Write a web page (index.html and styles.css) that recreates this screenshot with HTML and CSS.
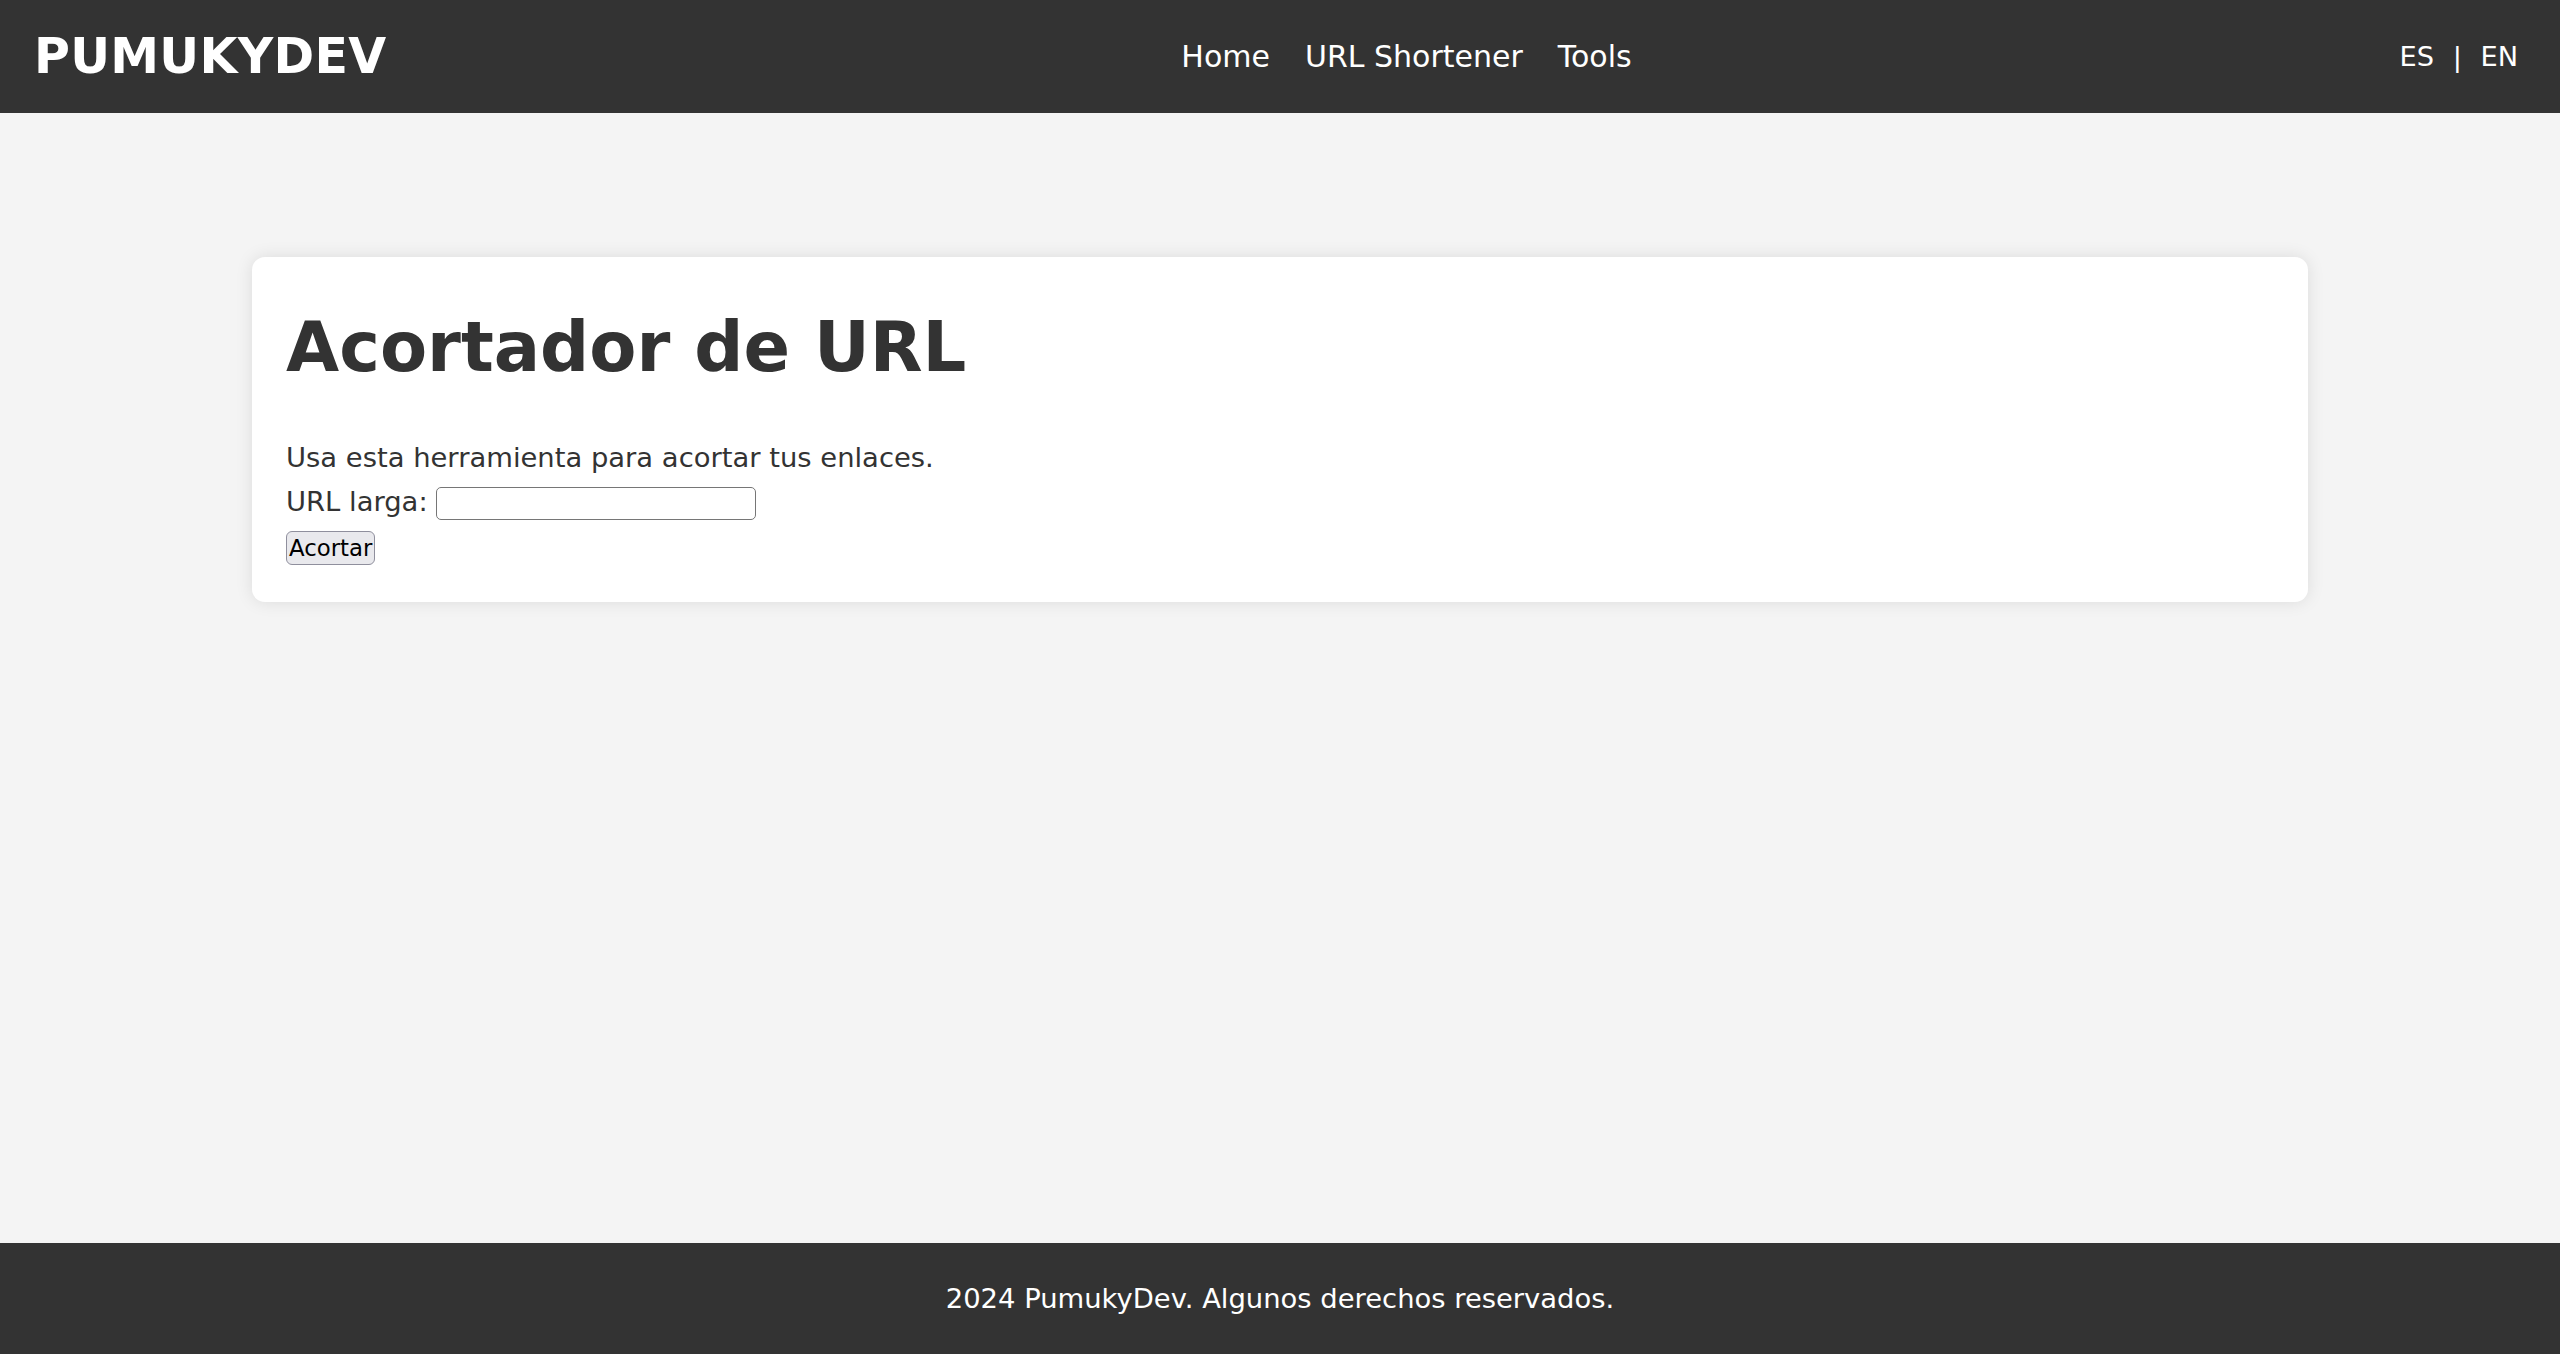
FILE: index.html
```html
<!DOCTYPE html>
<html lang="es">
<head>
<meta charset="utf-8">
<title>Acortador de URL - PumukyDev</title>
<link rel="stylesheet" href="styles.css">
</head>
<body>
<header class="site-header">
  <div class="logo">PUMUKYDEV</div>
  <nav class="nav">
    <a href="#">Home</a>
    <a href="#">URL Shortener</a>
    <a href="#">Tools</a>
  </nav>
  <div class="lang">
    <a href="#">ES</a>
    <span class="sep">|</span>
    <a href="#">EN</a>
  </div>
</header>
<main class="main">
  <section class="card">
    <h1 class="title">Acortador de URL</h1>
    <p class="intro">Usa esta herramienta para acortar tus enlaces.</p>
    <form class="form">
      <div class="field"><label for="url">URL larga:</label> <input id="url" type="text" class="url-input"></div>
      <button type="button" class="btn">Acortar</button>
    </form>
  </section>
</main>
<footer class="site-footer">2024 PumukyDev. Algunos derechos reservados.</footer>
</body>
</html>
```
FILE: styles.css
```css
html, body {
  margin: 0;
  padding: 0;
}

body {
  font-family: "DejaVu Sans", "Liberation Sans", sans-serif;
  font-size: 27.4px;
  color: #333;
  background: #f4f4f4;
  min-height: 100vh;
  display: flex;
  flex-direction: column;
}

a {
  color: inherit;
  text-decoration: none;
}

.site-header {
  height: 113px;
  box-sizing: border-box;
  padding: 0 42px 0 34px;
  background: #333;
  color: #fff;
  display: flex;
  align-items: center;
  justify-content: space-between;
}

.logo {
  font-size: 49px;
  font-weight: bold;
  line-height: 1;
  letter-spacing: 0.3px;
}

.nav {
  display: flex;
  gap: 35px;
  font-size: 30px;
  margin-left: 27px;
}

.lang {
  display: flex;
  align-items: center;
  gap: 18.7px;
  font-size: 27.2px;
}

.main {
  flex: 1;
  padding-top: 144px;
}

.card {
  width: 2056px;
  box-sizing: border-box;
  margin: 0 auto;
  background: #fff;
  border-radius: 13px;
  box-shadow: 0 0 17px rgba(0, 0, 0, 0.1);
  padding: 50px 34px 37px;
}

.title {
  margin: 0 0 55px;
  font-size: 68.7px;
  font-weight: bold;
  line-height: normal;
  color: #333;
}

.intro {
  margin: 0 0 13px;
}

.form {
  margin: 0;
}

.field {
  margin: 0 0 11px;
}

.url-input {
  width: 320px;
  height: 33px;
  box-sizing: border-box;
  border: 1.7px solid #767676;
  border-radius: 5px;
  padding: 1.7px 3.4px;
  font-family: "DejaVu Sans", sans-serif;
  font-size: 22.8px;
  background: #fff;
  margin: 0;
}

.btn {
  display: block;
  height: 34px;
  box-sizing: border-box;
  font-family: "DejaVu Sans", sans-serif;
  font-size: 22.8px;
  color: #000;
  background: #e9e9ed;
  border: 1.7px solid #8f8f9d;
  border-radius: 6px;
  padding: 0 2px;
  margin: 0;
  line-height: normal;
}

.site-footer {
  height: 111px;
  background: #333;
  color: #fff;
  display: flex;
  align-items: center;
  justify-content: center;
  font-size: 27.4px;
}
```
